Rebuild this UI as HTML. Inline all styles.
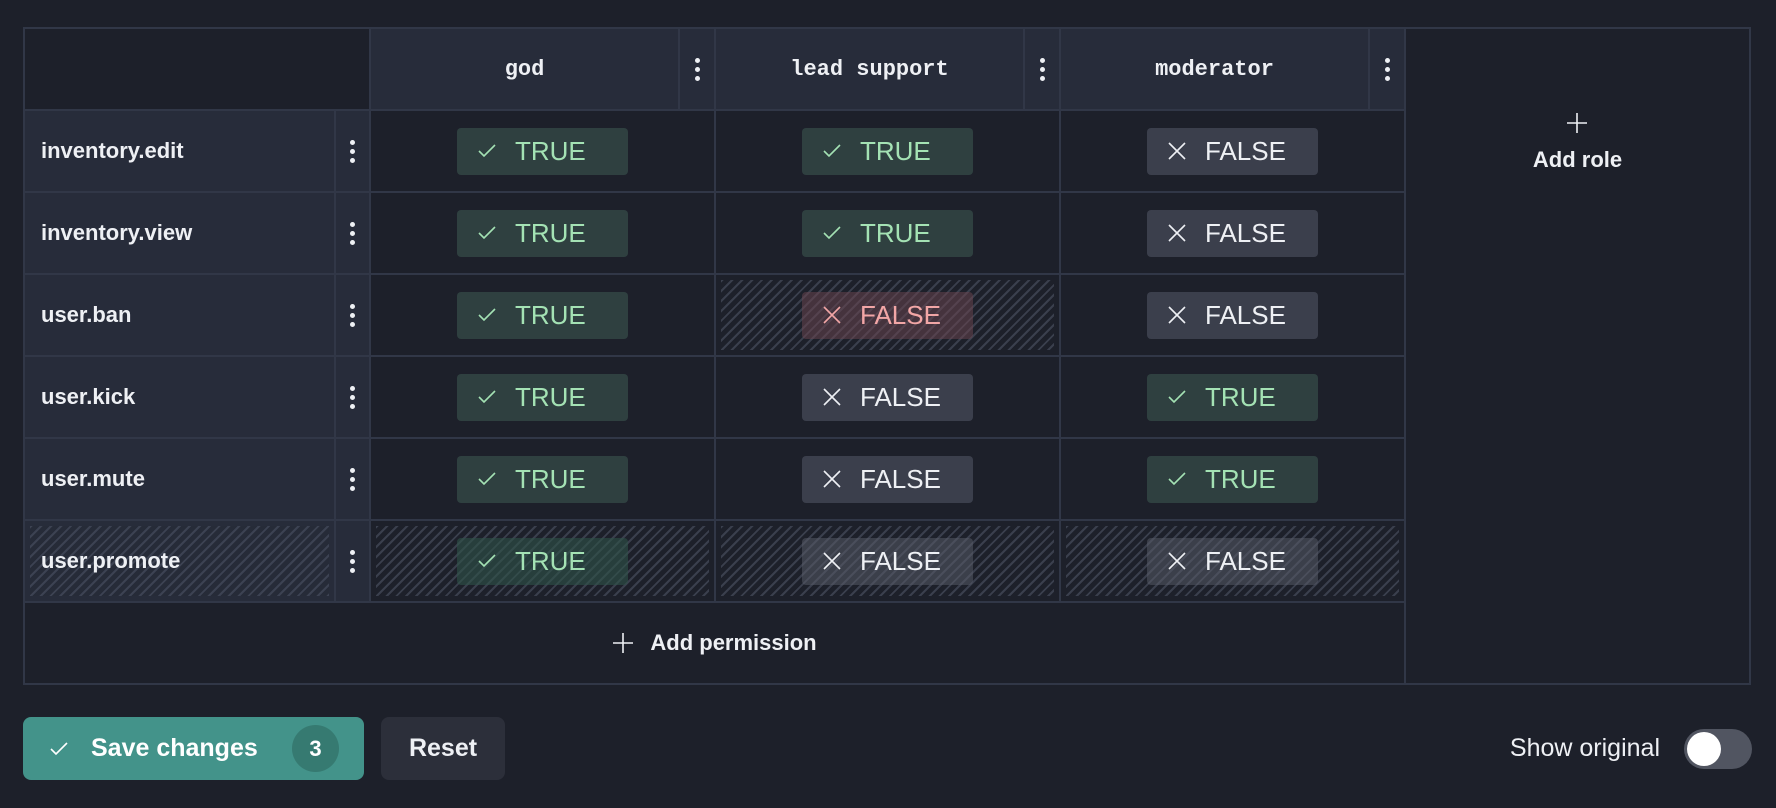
<!DOCTYPE html>
<html><head><meta charset="utf-8"><style>
*{box-sizing:border-box;margin:0;padding:0}
body{width:1776px;height:808px;background:#1d202a;font-family:"Liberation Sans",sans-serif;color:#eef0f4;position:relative;overflow:hidden}
.grid{position:absolute;left:23px;top:27px;width:1728px;height:658px;background:#313747;padding:2px;display:grid;gap:2px;
grid-template-columns:309px 33px 343px 343px 343px 343px;grid-template-rows:repeat(8,80px)}
.c{background:#1d202a;display:flex;align-items:center;justify-content:center;position:relative}
.hd{background:#272c3a}
.hdname{position:absolute;left:0;top:0;bottom:0;right:34px;display:flex;align-items:center;justify-content:center;font-family:"Liberation Mono",monospace;font-weight:bold;font-size:22px;border-right:2px solid #313747}
.hk{position:absolute;right:0;top:0;bottom:0;width:34px;display:flex;align-items:center;justify-content:center}
.lab{background:#272c3a;justify-content:flex-start;padding-left:16px;font-weight:bold;font-size:22px}
.dots{background:#272c3a}
.k{width:5px;display:flex;flex-direction:column;gap:4px}
.k i{display:block;width:5px;height:5px;border-radius:50%;background:#eef0f4}
.b{width:171px;height:47px;border-radius:4px;display:flex;align-items:center;padding-left:20px;font-size:26px;gap:18px;position:relative;z-index:1}
.t{background:#2f4040;color:#a4e2b4}
.f{background:#3b3f4c;color:#eef0f4}
.r{background:rgba(110,70,80,.5);color:#f2a6a6}
.hatch::before{content:"";position:absolute;inset:5px;background:repeating-linear-gradient(135deg,#3a3f4d 0 2px,transparent 2px 7px)}
.hatch .t{background:rgba(47,84,74,.6)}
.hatch .f{background:rgba(90,94,106,.5)}
.lab.hatch::before{background:repeating-linear-gradient(135deg,#3c4252 0 2px,#262b38 2px 7px)}
.lab span{position:relative;z-index:1}
svg{display:block}
</style></head><body>
<div class="grid">
<div class="c" style="grid-column:1/3"></div>
<div class="c hd"><div class="hdname">god</div><div class="hk"><div class="k"><i></i><i></i><i></i></div></div></div>
<div class="c hd"><div class="hdname">lead support</div><div class="hk"><div class="k"><i></i><i></i><i></i></div></div></div>
<div class="c hd"><div class="hdname">moderator</div><div class="hk"><div class="k"><i></i><i></i><i></i></div></div></div>
<div class="c" style="grid-row:1/9;grid-column:6;align-items:flex-start"><div style="margin-top:82px;text-align:center;font-size:22px;font-weight:bold"><svg width="24" height="24" viewBox="0 0 24 24" style="margin:0 auto 12px"><path d="M12 2v20M2 12h20" stroke="#eef0f4" stroke-width="1.6"/></svg>Add role</div></div>

<div class="c lab">inventory.edit</div><div class="c dots"><div class="k"><i></i><i></i><i></i></div></div>
<div class="c"><div class="b t"><svg width="20" height="16" viewBox="0 0 20 16"><path d="M2 8l5 5L18 2" fill="none" stroke="#a4e2b4" stroke-width="1.6"/></svg>TRUE</div></div>
<div class="c"><div class="b t"><svg width="20" height="16" viewBox="0 0 20 16"><path d="M2 8l5 5L18 2" fill="none" stroke="#a4e2b4" stroke-width="1.6"/></svg>TRUE</div></div>
<div class="c"><div class="b f"><svg width="20" height="20" viewBox="0 0 20 20"><path d="M2 2l16 16M18 2L2 18" stroke="#eef0f4" stroke-width="1.6"/></svg>FALSE</div></div>

<div class="c lab">inventory.view</div><div class="c dots"><div class="k"><i></i><i></i><i></i></div></div>
<div class="c"><div class="b t"><svg width="20" height="16" viewBox="0 0 20 16"><path d="M2 8l5 5L18 2" fill="none" stroke="#a4e2b4" stroke-width="1.6"/></svg>TRUE</div></div>
<div class="c"><div class="b t"><svg width="20" height="16" viewBox="0 0 20 16"><path d="M2 8l5 5L18 2" fill="none" stroke="#a4e2b4" stroke-width="1.6"/></svg>TRUE</div></div>
<div class="c"><div class="b f"><svg width="20" height="20" viewBox="0 0 20 20"><path d="M2 2l16 16M18 2L2 18" stroke="#eef0f4" stroke-width="1.6"/></svg>FALSE</div></div>

<div class="c lab">user.ban</div><div class="c dots"><div class="k"><i></i><i></i><i></i></div></div>
<div class="c"><div class="b t"><svg width="20" height="16" viewBox="0 0 20 16"><path d="M2 8l5 5L18 2" fill="none" stroke="#a4e2b4" stroke-width="1.6"/></svg>TRUE</div></div>
<div class="c hatch"><div class="b r"><svg width="20" height="20" viewBox="0 0 20 20"><path d="M2 2l16 16M18 2L2 18" stroke="#f2a6a6" stroke-width="1.6"/></svg>FALSE</div></div>
<div class="c"><div class="b f"><svg width="20" height="20" viewBox="0 0 20 20"><path d="M2 2l16 16M18 2L2 18" stroke="#eef0f4" stroke-width="1.6"/></svg>FALSE</div></div>

<div class="c lab">user.kick</div><div class="c dots"><div class="k"><i></i><i></i><i></i></div></div>
<div class="c"><div class="b t"><svg width="20" height="16" viewBox="0 0 20 16"><path d="M2 8l5 5L18 2" fill="none" stroke="#a4e2b4" stroke-width="1.6"/></svg>TRUE</div></div>
<div class="c"><div class="b f"><svg width="20" height="20" viewBox="0 0 20 20"><path d="M2 2l16 16M18 2L2 18" stroke="#eef0f4" stroke-width="1.6"/></svg>FALSE</div></div>
<div class="c"><div class="b t"><svg width="20" height="16" viewBox="0 0 20 16"><path d="M2 8l5 5L18 2" fill="none" stroke="#a4e2b4" stroke-width="1.6"/></svg>TRUE</div></div>

<div class="c lab">user.mute</div><div class="c dots"><div class="k"><i></i><i></i><i></i></div></div>
<div class="c"><div class="b t"><svg width="20" height="16" viewBox="0 0 20 16"><path d="M2 8l5 5L18 2" fill="none" stroke="#a4e2b4" stroke-width="1.6"/></svg>TRUE</div></div>
<div class="c"><div class="b f"><svg width="20" height="20" viewBox="0 0 20 20"><path d="M2 2l16 16M18 2L2 18" stroke="#eef0f4" stroke-width="1.6"/></svg>FALSE</div></div>
<div class="c"><div class="b t"><svg width="20" height="16" viewBox="0 0 20 16"><path d="M2 8l5 5L18 2" fill="none" stroke="#a4e2b4" stroke-width="1.6"/></svg>TRUE</div></div>

<div class="c lab hatch"><span>user.promote</span></div><div class="c dots"><div class="k"><i></i><i></i><i></i></div></div>
<div class="c hatch"><div class="b t"><svg width="20" height="16" viewBox="0 0 20 16"><path d="M2 8l5 5L18 2" fill="none" stroke="#a4e2b4" stroke-width="1.6"/></svg>TRUE</div></div>
<div class="c hatch"><div class="b f"><svg width="20" height="20" viewBox="0 0 20 20"><path d="M2 2l16 16M18 2L2 18" stroke="#eef0f4" stroke-width="1.6"/></svg>FALSE</div></div>
<div class="c hatch"><div class="b f"><svg width="20" height="20" viewBox="0 0 20 20"><path d="M2 2l16 16M18 2L2 18" stroke="#eef0f4" stroke-width="1.6"/></svg>FALSE</div></div>

<div class="c" style="grid-column:1/6;font-size:22px;font-weight:bold;gap:16px"><svg width="22" height="22" viewBox="0 0 22 22"><path d="M11 1v20M1 11h20" stroke="#eef0f4" stroke-width="1.6"/></svg>Add permission</div>
</div>

<div style="position:absolute;left:23px;top:717px;width:341px;height:63px;border-radius:8px;background:#43938a;display:flex;align-items:center;padding-left:26px;font-size:25px;font-weight:bold;color:#fff">
<svg width="20" height="16" viewBox="0 0 20 16" style="margin-right:22px"><path d="M2 8l5 5L18 2" fill="none" stroke="#fff" stroke-width="1.6"/></svg>Save changes
<div style="position:absolute;left:269px;top:8px;width:47px;height:47px;border-radius:50%;background:#367a71;display:flex;align-items:center;justify-content:center;font-size:22px">3</div></div>
<div style="position:absolute;left:381px;top:717px;width:124px;height:63px;border-radius:8px;background:#2c2f3a;display:flex;align-items:center;justify-content:center;font-size:25px;font-weight:bold">Reset</div>
<div style="position:absolute;right:116px;top:734px;font-size:25px;color:#eef0f4">Show original</div>
<div style="position:absolute;left:1684px;top:729px;width:68px;height:40px;border-radius:20px;background:#515561"><div style="position:absolute;left:3px;top:3px;width:34px;height:34px;border-radius:50%;background:#fff"></div></div>
</body></html>
